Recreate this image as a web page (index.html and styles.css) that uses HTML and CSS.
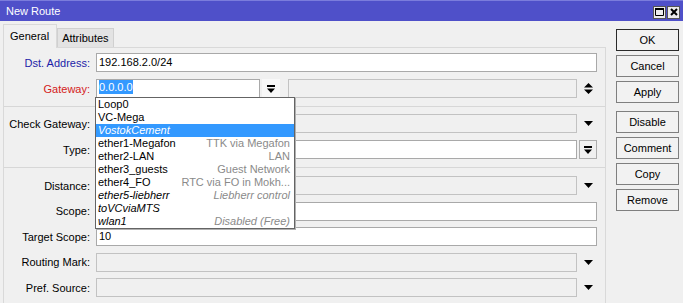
FILE: index.html
```html
<!DOCTYPE html>
<html lang="en">
<head>
    <meta charset="UTF-8">
    <title>New Route</title>
    <link rel="stylesheet" href="styles.css">
</head>
<body>
<div class="window">
    <div class="titlebar">
        <span class="title">New Route</span>
        <div class="title-buttons">
            <span class="tbtn"><svg width="9" height="8" viewBox="0 0 9 8"><path d="M0.5 0.5H8.5V7.5H0.5Z M0.5 1.5H8.5" fill="none" stroke="#000" stroke-width="1"/><rect x="0" y="0" width="9" height="2"/></svg></span>
            <span class="tbtn"><svg width="8" height="8" viewBox="0 0 8 8"><path d="M1 1L7 7M7 1L1 7" stroke="#000" stroke-width="2"/></svg></span>
        </div>
    </div>
    <div class="content">
        <div class="main">
            <div class="tabs">
                <div class="tab active">General</div>
                <div class="tab">Attributes</div>
            </div>
            <div class="panel">
                <div class="group">
                    <div class="row">
                        <label class="lbl blue">Dst. Address:</label>
                        <div class="field white">192.168.2.0/24</div>
                    </div>
                    <div class="row">
                        <label class="lbl red">Gateway:</label>
                        <div class="field white gw"><span class="sel">0.0.0.0</span></div>
                        <span class="flatbtn"><svg width="8" height="8" viewBox="0 0 8 8"><rect x="0" y="0" width="8" height="2"/><path d="M0 3.5H8L4 8Z"/></svg></span>
                        <div class="field grey gw2"></div>
                        <span class="arrow"><svg width="9" height="11" viewBox="0 0 9 11"><path d="M4.5 0L9 4.5H0Z M0 6.5H9L4.5 11Z"/></svg></span>
                    </div>
                </div>
                <div class="sep first"></div>
                <div class="group">
                    <div class="row">
                        <label class="lbl">Check Gateway:</label>
                        <div class="field grey"></div>
                        <span class="arrow"><svg width="9" height="5" viewBox="0 0 9 5"><path d="M0 0H9L4.5 5Z"/></svg></span>
                    </div>
                    <div class="row">
                        <label class="lbl">Type:</label>
                        <div class="field white"></div>
                        <span class="boxbtn"><svg width="8" height="8" viewBox="0 0 8 8"><rect x="0" y="0" width="8" height="2"/><path d="M0 3.5H8L4 8Z"/></svg></span>
                    </div>
                </div>
                <div class="sep"></div>
                <div class="group tight">
                    <div class="row">
                        <label class="lbl">Distance:</label>
                        <div class="field grey"></div>
                        <span class="arrow"><svg width="9" height="5" viewBox="0 0 9 5"><path d="M0 0H9L4.5 5Z"/></svg></span>
                    </div>
                    <div class="row">
                        <label class="lbl">Scope:</label>
                        <div class="field white"></div>
                    </div>
                    <div class="row">
                        <label class="lbl">Target Scope:</label>
                        <div class="field white">10</div>
                    </div>
                    <div class="row">
                        <label class="lbl">Routing Mark:</label>
                        <div class="field grey"></div>
                        <span class="arrow"><svg width="9" height="5" viewBox="0 0 9 5"><path d="M0 0H9L4.5 5Z"/></svg></span>
                    </div>
                    <div class="row">
                        <label class="lbl">Pref. Source:</label>
                        <div class="field grey"></div>
                        <span class="arrow"><svg width="9" height="5" viewBox="0 0 9 5"><path d="M0 0H9L4.5 5Z"/></svg></span>
                    </div>
                </div>
            </div>
        </div>
        <div class="side">
            <button class="btn default">OK</button>
            <button class="btn">Cancel</button>
            <button class="btn">Apply</button>
            <button class="btn spaced">Disable</button>
            <button class="btn">Comment</button>
            <button class="btn">Copy</button>
            <button class="btn">Remove</button>
        </div>
    </div>

    <!-- gateway dropdown list, open over the form -->
    <div class="popup">
        <div class="item"><span>Loop0</span></div>
        <div class="item"><span>VC-Mega</span></div>
        <div class="item hl it"><span>VostokCement</span></div>
        <div class="item"><span>ether1-Megafon</span><span class="desc">TTK via Megafon</span></div>
        <div class="item"><span>ether2-LAN</span><span class="desc">LAN</span></div>
        <div class="item"><span>ether3_guests</span><span class="desc">Guest Network</span></div>
        <div class="item"><span>ether4_FO</span><span class="desc">RTC via FO in Mokh...</span></div>
        <div class="item it"><span>ether5-liebherr</span><span class="desc">Liebherr control</span></div>
        <div class="item it"><span>toVCviaMTS</span></div>
        <div class="item it"><span>wlan1</span><span class="desc">Disabled (Free)</span></div>
    </div>
</div>
</body>
</html>
```

FILE: styles.css
```css
body {
    margin: 0;
    background-color: #f0f0f0;
    font-family: "Liberation Sans", Arial, sans-serif;
    font-size: 11px;
    color: #000;
}

.window {
    position: relative;
    width: 683px;
    height: 303px;
    overflow: hidden;
}

.titlebar {
    height: 21px;
    background-color: #4f50c9;
    border-top: 1px solid #7b7cdc;
    box-sizing: border-box;
    display: flex;
    align-items: center;
    justify-content: space-between;
    padding: 0 3px 0 6px;
    color: #fff;
}

.title-buttons {
    display: flex;
    gap: 1px;
    margin-top: 2px;
}

.tbtn {
    width: 13px;
    height: 13px;
    box-sizing: border-box;
    background-color: #ececec;
    border: 1px solid #555;
    display: flex;
    align-items: center;
    justify-content: center;
}

.content {
    display: flex;
}

.main {
    width: 603px;
    margin-left: 3px;
}

.tabs {
    display: flex;
    align-items: flex-end;
    height: 26px;
}

.tab {
    height: 19px;
    box-sizing: border-box;
    padding: 0 4px;
    line-height: 18px;
    background-color: #e3e3e3;
    border: 1px solid #d0d0d0;
    border-bottom: none;
}

.tab.active {
    height: 24px;
    line-height: 22px;
    padding: 0 7px 0 6px;
    background-color: #f0f0f0;
    border-color: #d9d9d9;
    margin-bottom: -1px;
    position: relative;
    z-index: 1;
}

.panel {
    height: 256px;
    box-sizing: border-box;
    border: 1px solid #d9d9d9;
    border-bottom: none;
    padding-top: 5px;
}

.group {
    display: flex;
    flex-direction: column;
    gap: 7px;
}

.group.tight {
    gap: 6.5px;
}

.row {
    display: flex;
    align-items: center;
    height: 19px;
    padding-right: 8px;
}

.lbl {
    width: 86px;
    flex: none;
    margin-right: 6px;
    text-align: right;
}

.blue {
    color: #1c1ca8;
}

.red {
    color: #d42020;
}

.field {
    flex: 1;
    height: 19px;
    box-sizing: border-box;
    border: 1px solid #a9a9a9;
    padding-left: 2px;
    line-height: 17px;
    white-space: nowrap;
}

.white {
    background-color: #fff;
}

.grey {
    background-color: #f0f0f0;
    border-color: #c2c2c2;
}

.field.gw {
    flex: none;
    width: 164px;
}

.field.gw2 {
    margin-left: 8px;
}

.sel {
    display: inline-block;
    background-color: #3399ff;
    color: #fff;
    line-height: 14px;
    vertical-align: 1px;
}

.flatbtn {
    width: 18px;
    height: 19px;
    margin-left: 2px;
    background-color: #f8f8f8;
    display: flex;
    align-items: center;
    justify-content: center;
}

.boxbtn {
    width: 18px;
    height: 19px;
    box-sizing: border-box;
    margin-left: 2px;
    border: 1px solid #adadad;
    background-color: #f0f0f0;
    display: flex;
    align-items: center;
    justify-content: center;
}

.arrow {
    width: 20px;
    height: 19px;
    flex: none;
    padding-left: 2px;
    box-sizing: border-box;
    display: flex;
    align-items: center;
    justify-content: center;
}

.sep {
    height: 1px;
    background-color: #d7d7d7;
    margin: 8px 0;
}

.sep.first {
    margin: 8px 0 7px;
}

.side {
    width: 63px;
    margin-left: 10px;
    padding-top: 8px;
    display: flex;
    flex-direction: column;
    gap: 4px;
}

.btn {
    height: 22px;
    padding: 0;
    font-family: inherit;
    font-size: 11px;
    color: #000;
    background-color: #f2f2f2;
    border: 1px solid #7f7f7f;
    border-radius: 0;
}

.btn.default {
    border-color: #2a2a2a;
}

.btn.spaced {
    margin-top: 4px;
}

.popup {
    position: absolute;
    left: 95px;
    top: 97px;
    width: 200px;
    box-sizing: border-box;
    background-color: #fff;
    border: 1px solid #646464;
    box-shadow: 1px 1px 0 #b0b0b0;
    z-index: 5;
}

.item {
    display: flex;
    justify-content: space-between;
    height: 13px;
    line-height: 13px;
    padding: 0 4px 0 2px;
    white-space: nowrap;
}

.item.it {
    font-style: italic;
}

.item.hl {
    background-color: #3399ff;
    color: #fff;
}

.desc {
    color: #8a8a8a;
}
```
